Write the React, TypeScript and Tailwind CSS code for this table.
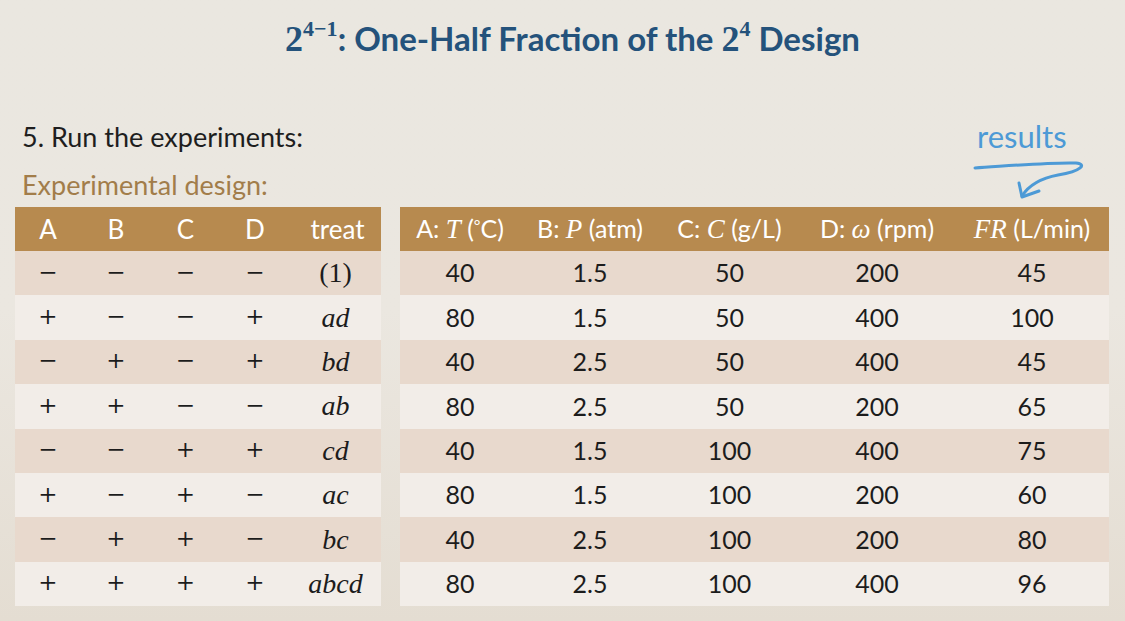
import React from 'react';

const SANS = "font-['Lato','Open_Sans',sans-serif]";
const SERIF = "font-['Liberation_Serif','DejaVu_Serif',serif]";
const SIGN = "font-['DejaVu_Serif',serif]";

// A B C D signs, treatment name, then the real factor levels + response
const runs = [
  { s: ['-', '-', '-', '-'], treat: '(1)', v: ['40', '1.5', '50', '200', '45'] },
  { s: ['+', '-', '-', '+'], treat: 'ad', v: ['80', '1.5', '50', '400', '100'] },
  { s: ['-', '+', '-', '+'], treat: 'bd', v: ['40', '2.5', '50', '400', '45'] },
  { s: ['+', '+', '-', '-'], treat: 'ab', v: ['80', '2.5', '50', '200', '65'] },
  { s: ['-', '-', '+', '+'], treat: 'cd', v: ['40', '1.5', '100', '400', '75'] },
  { s: ['+', '-', '+', '-'], treat: 'ac', v: ['80', '1.5', '100', '200', '60'] },
  { s: ['-', '+', '+', '-'], treat: 'bc', v: ['40', '2.5', '100', '200', '80'] },
  { s: ['+', '+', '+', '+'], treat: 'abcd', v: ['80', '2.5', '100', '400', '96'] },
];

const leftCols = 'grid-cols-[66px_70px_69px_70px_91px]';
const rightCols = 'grid-cols-[120px_140px_139px_156px_154px]';

function Sign({ s }: { s: string }) {
  return (
    <span className={`${SIGN} text-[23px] leading-none text-[#1c1c1c]`}>
      {s === '+' ? '+' : '\u2212'}
    </span>
  );
}

function Results() {
  return (
    <div className="absolute left-[972px] top-[121px] w-[120px]">
      <div className={`${SANS} text-[31px] leading-none text-[#4d9ad6] pl-[5px]`}>results</div>
      <svg width="120" height="52" viewBox="0 0 120 52" className="-mt-[3px]">
        <path
          d="M3 19 C 35 17, 80 13, 104 14 C 115 15, 110 22, 86 26 C 70 29, 57 36, 50 47"
          fill="none"
          stroke="#4d9ad6"
          strokeWidth="3"
          strokeLinecap="round"
        />
        <path d="M47 34 L 50 48 L 67 42" fill="none" stroke="#4d9ad6" strokeWidth="3" strokeLinecap="round" strokeLinejoin="round" />
      </svg>
    </div>
  );
}

export default function App() {
  return (
    <div className={`relative w-[1125px] h-[621px] overflow-hidden bg-gradient-to-b from-[#eae7e0] via-[#ebe7e0] to-[#e4ddd2] ${SANS}`}>
      {/* Title */}
      <div className="pt-[18px] flex justify-center pl-[20px]">
        <h1 className="text-[#24527b] text-[33px] font-bold leading-[40px]">
          <span className={`${SERIF} text-[36px]`}>2</span>
          <span className={`${SERIF} text-[22px] relative top-[-15px] align-baseline`}>4−1</span>
          : One-Half Fraction of the{' '}
          <span className={`${SERIF} text-[36px]`}>2</span>
          <span className={`${SERIF} text-[22px] relative top-[-15px] align-baseline`}>4</span> Design
        </h1>
      </div>

      <div className="px-[22px] mt-[56px] text-[27px] leading-[34px] text-[#1e1e1e]">5. Run the experiments:</div>
      <div className="px-[22px] mt-[14px] text-[27px] leading-[34px] text-[#a27d4a]">Experimental design:</div>

      <Results />

      <div className="flex gap-[19px] pl-[15px] mt-[5px]">
        {/* coded design */}
        <div className="w-[366px]">
          <div className={`grid ${leftCols} h-[44px] items-center bg-[#b78a4f] text-white text-[26px]`}>
            {['A', 'B', 'C', 'D'].map((h) => (
              <div key={h} className="text-center">{h}</div>
            ))}
            <div className="text-center pl-[4px]">treat</div>
          </div>
          {runs.map((r, i) => (
            <div
              key={r.treat}
              className={`grid ${leftCols} h-[44.4px] items-center ${i % 2 === 0 ? 'bg-[#e8d9cd]' : 'bg-[#f2ede8]'}`}
            >
              {r.s.map((s, j) => (
                <div key={j} className="text-center">
                  <Sign s={s} />
                </div>
              ))}
              <div className={`text-center ${SERIF} text-[28px] text-[#1c1c1c] ${r.treat === '(1)' ? '' : 'italic'}`}>
                {r.treat}
              </div>
            </div>
          ))}
        </div>

        {/* natural units */}
        <div className="w-[709px]">
          <div className={`grid ${rightCols} h-[44px] items-center bg-[#b78a4f] text-white text-[25px] whitespace-nowrap`}>
            <div className="text-center">
              A: <i className={`${SERIF} text-[27px]`}>T</i> (<span className="text-[16px] relative top-[-7px]">°</span>C)
            </div>
            <div className="text-center">
              B: <i className={`${SERIF} text-[27px]`}>P</i> (atm)
            </div>
            <div className="text-center">
              C: <i className={`${SERIF} text-[27px]`}>C</i> (g/L)
            </div>
            <div className="text-center">
              D: <i className={`${SERIF} text-[27px]`}>ω</i> (rpm)
            </div>
            <div className="text-center">
              <i className={`${SERIF} text-[27px]`}>FR</i> (L/min)
            </div>
          </div>
          {runs.map((r, i) => (
            <div
              key={r.treat}
              className={`grid ${rightCols} h-[44.4px] items-center text-[25px] text-[#1c1c1c] ${i % 2 === 0 ? 'bg-[#e8d9cd]' : 'bg-[#f2ede8]'}`}
            >
              {r.v.map((v, j) => (
                <div key={j} className="text-center">{v}</div>
              ))}
            </div>
          ))}
        </div>
      </div>
    </div>
  );
}
